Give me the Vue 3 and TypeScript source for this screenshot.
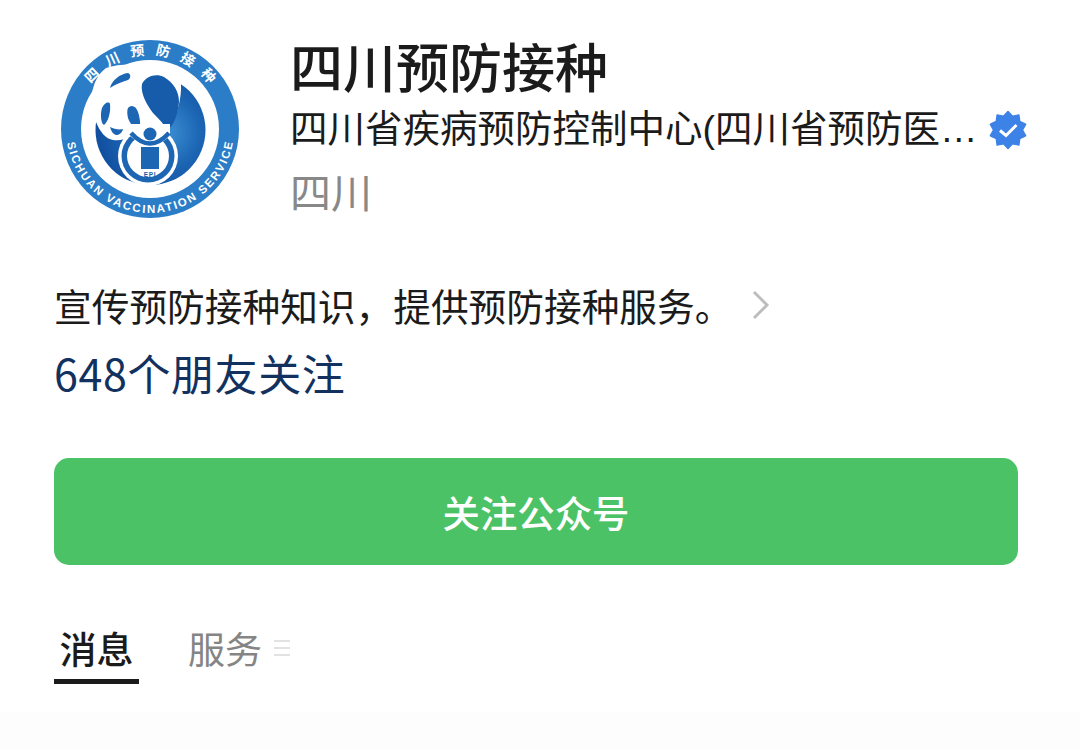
<script setup lang="ts">
// ten-pointed seal behind the verified tick
const seal = Array.from({ length: 20 }, (_, i) => {
  const a = (i * Math.PI) / 10 - Math.PI / 2
  const r = i % 2 === 0 ? 18.5 : 14.5
  return `${(20 + r * Math.cos(a)).toFixed(1)},${(20 + r * Math.sin(a)).toFixed(1)}`
}).join(' ')
</script>

<template>
  <div class="page">
    <header class="head">
      <svg class="logo" width="180" height="180" viewBox="0 0 180 180">
        <defs>
          <radialGradient id="disk" cx="0.62" cy="0.52" r="0.6">
            <stop offset="0" stop-color="#3f93d6" />
            <stop offset="0.55" stop-color="#1c66b4" />
            <stop offset="1" stop-color="#114f9f" />
          </radialGradient>
          <path id="arcTop" d="M 16 89 A 74 74 0 0 1 164 89" />
          <path id="arcBottom" d="M 6 89 A 84 84 0 0 0 174 89" />
        </defs>
        <circle cx="90" cy="89" r="89" fill="#2a7dc6" />
        <circle cx="90" cy="89" r="69" fill="#fff" />
        <circle cx="90.5" cy="90" r="55" fill="url(#disk)" />
        <text class="arc-cn"><textPath href="#arcTop" startOffset="52.2%" text-anchor="middle">四川预防接种</textPath></text>
        <text class="arc-en"><textPath href="#arcBottom" startOffset="50%" text-anchor="middle" textLength="236">SICHUAN VACCINATION SERVICE</textPath></text>

        <!-- panda head -->
        <path d="M36 82 C40 92 46 99 53 100 C60 101 66 99 70 96 L108 92 C116 78 122 60 121 43 C110 26 70 20 46 28 C30 40 28 66 36 82 Z" fill="#fff" />
        <path d="M50 48 C52 40 60 34 68 33 C71 34 71 38 68 40 C62 42 56 44 50 48 Z" fill="#1c66b4" />
        <path d="M82 44 C86 36 96 33 104 37 C114 43 119 52 119 62 C118 74 114 84 108 91 C104 84 98 78 93 73 C88 66 80 54 82 44 Z" fill="#165cab" />
        <path d="M42 68 C44 63 49 61 50 64 C51 72 48 82 44 85 C41 84 40 74 42 68 Z" fill="#1c66b4" />
        <path d="M68 68 C71 64 76 66 78 72 C80 78 81 86 79 89 C75 90 70 84 68 78 C67 74 67 70 68 68 Z" fill="#1c66b4" />
        <path d="M50 87 C54 89 59 90 63 89 C62 93 59 95 56 95 C53 94 51 91 50 87 Z" fill="#1c66b4" />

        <!-- child in the ring -->
        <circle cx="88" cy="116" r="30" fill="#fff" />
        <circle cx="88" cy="116" r="26.5" fill="#1c66b4" />
        <circle cx="88" cy="116" r="21" fill="#fff" />
        <path d="M68 84 L110 84 L110 96 Q90 114 70 96 Z" fill="#fff" />
        <path d="M71 93 Q90 114 109 93" fill="none" stroke="#1c66b4" stroke-width="4.5" />
        <circle cx="90" cy="94" r="6.5" fill="#1c66b4" />
        <rect x="81" y="107" width="18" height="22" fill="#1c66b4" />
        <text x="90" y="137" class="epi" text-anchor="middle">EPI</text>
      </svg>

      <div class="info">
        <h1 class="name">四川预防接种</h1>
        <div class="org">
          <span class="org-name">四川省疾病预防控制中心(四川省预防医学科学院)</span>
          <svg class="seal" width="40" height="40" viewBox="0 0 40 40">
            <polygon :points="seal" fill="#3d82e6" stroke="#3d82e6" stroke-width="1.5" stroke-linejoin="round" />
            <path d="M12 20.5 L18 25.5 L28.5 15" fill="none" stroke="#fff" stroke-width="3" />
          </svg>
        </div>
        <div class="region">四川</div>
      </div>
    </header>

    <div class="desc">
      <span>宣传预防接种知识，提供预防接种服务。</span>
      <svg class="chev" width="18" height="30" viewBox="0 0 18 30">
        <path d="M2 2 L15 15 L2 28" fill="none" stroke="#bdbdbd" stroke-width="3" />
      </svg>
    </div>
    <div class="friends">648个朋友关注</div>

    <button class="follow">关注公众号</button>

    <nav class="tabs">
      <div class="tab active">消息</div>
      <div class="tab">服务<span class="menu"><i></i><i></i><i></i></span></div>
    </nav>
    <div class="rest"></div>
  </div>
</template>

<style>
html, body { margin: 0; background: #fff; }
</style>

<style scoped>
.page {
  height: 749px;
  display: flex;
  flex-direction: column;
  padding-left: 54px;
  box-sizing: border-box;
  overflow: hidden;
  font-family: "Noto Sans CJK SC", sans-serif;
  color: #1b1b1b;
}
.head { display: flex; padding-top: 34px; height: 230px; box-sizing: border-box; }
.logo { margin: 6px 50px 0 6px; flex: none; }
.arc-cn { font: 700 14px "Noto Sans CJK SC", sans-serif; fill: #fff; letter-spacing: 10.5px; }
.arc-en { font: 700 11.5px "Liberation Sans", sans-serif; fill: #fff; }
.epi { font: 700 6.5px "Liberation Sans", sans-serif; fill: #1c5da8; letter-spacing: 0.6px; }
.info { display: flex; flex-direction: column; }
.name { margin: 0; font-size: 53px; font-weight: 500; line-height: 62px; }
.org { display: flex; align-items: flex-start; height: 63px; }
.org-name {
  width: 688px;
  padding-top: 3px;
  font-family: "Liberation Sans", "Noto Sans CJK SC", sans-serif;
  font-size: 37.5px;
  line-height: 60px;
  white-space: nowrap;
  overflow: hidden;
  text-overflow: ellipsis;
}
.seal { margin: 14px 0 0 10px; flex: none; }
.region { font-size: 41px; line-height: 63px; color: #888; }
.desc {
  display: flex;
  align-items: center;
  margin-top: 40px;
  height: 69px;
  font-size: 37.7px;
}
.chev { margin-left: 20px; }
.friends { font-size: 43px; line-height: 66px; color: #12315f; letter-spacing: 0.6px; }
.follow {
  width: 964px;
  height: 107px;
  margin: 53px 0 0;
  border: 0;
  border-radius: 15px;
  background: #4cc266;
  color: #fff;
  font-family: inherit;
  font-size: 37.4px;
  font-weight: 500;
}
.tabs { display: flex; margin-top: 56px; gap: 49px; }
.tab {
  display: flex;
  align-items: center;
  font-size: 37px;
  line-height: 54px;
  height: 54px;
  color: #858585;
}
.tab.active {
  width: 85px;
  justify-content: center;
  padding-bottom: 4px;
  color: #1b1b1b;
  font-weight: 500;
  border-bottom: 5px solid #1b1b1b;
}
.menu { display: flex; flex-direction: column; gap: 5px; margin-left: 12px; }
.menu i { display: block; width: 16px; height: 2px; background: #e2e2e2; }
.rest { flex: 1; margin: 28px 0 0 -54px; background: #fdfdfd; }
</style>
